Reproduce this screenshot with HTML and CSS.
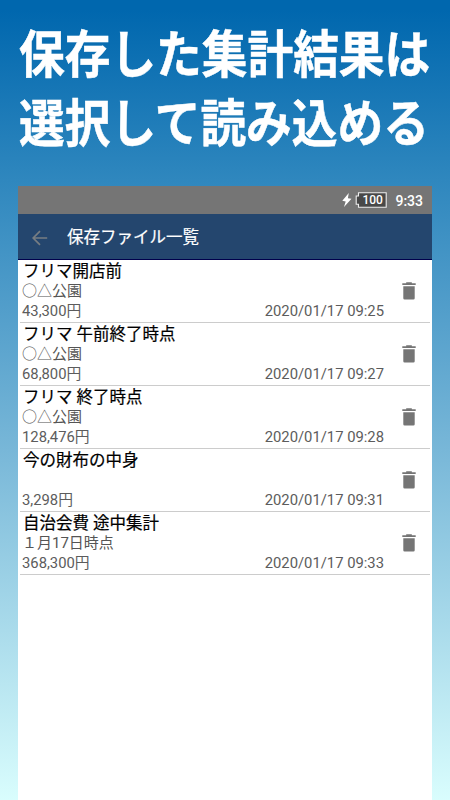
FILE: index.html
```html
<!DOCTYPE html>
<html lang="ja">
<head>
<meta charset="utf-8">
<title>保存ファイル一覧</title>
<link rel="stylesheet" href="styles.css">
</head>
<body>
<svg class="symbols" width="0" height="0"><symbol id="trash" viewBox="0 0 14 18"><path d="M4.2 0.2h5.6v1h3.9v1.9H0.3V1.2h3.9zM1.3 4.2h11.4v12.1q0 1.2-1.3 1.2H2.6q-1.3 0-1.3-1.2z" fill="#757575"/></symbol></svg>
<h1 class="headline"><span>保存した集計結果は</span><span>選択して読み込める</span></h1>
<main class="phone">
  <div class="status">
    <svg class="bolt" width="10" height="14" viewBox="0 0 10 14"><path d="M6.8 0L.3 7.8l3.4.7L2 14l7.5-8.2-3.6-.6z" fill="#fff"/></svg>
    <div class="battery"><svg width="32" height="16" viewBox="0 0 32 16"><path d="M3.5.8h27.7v14.4H3.5v-3H1.2V4h2.3z" fill="#484848" stroke="#eee" stroke-width="1.1"/></svg><span>100</span></div>
    <span class="clock">9:33</span>
  </div>
  <header class="bar">
    <svg width="16" height="16" viewBox="0 0 16 16"><path d="M15.2 8H1.5M8 1.2L1.2 8 8 14.8" fill="none" stroke="#777d82" stroke-width="1.7"/></svg>
    <h2>保存ファイル一覧</h2>
  </header>
  <ul class="list">
    <li><div class="info"><p class="name">フリマ開店前</p><p class="note">○△公園</p><p class="meta"><span>43,300円</span><time>2020/01/17 09:25</time></p></div><svg class="trash"><use href="#trash"/></svg></li>
    <li><div class="info"><p class="name">フリマ 午前終了時点</p><p class="note">○△公園</p><p class="meta"><span>68,800円</span><time>2020/01/17 09:27</time></p></div><svg class="trash"><use href="#trash"/></svg></li>
    <li><div class="info"><p class="name">フリマ 終了時点</p><p class="note">○△公園</p><p class="meta"><span>128,476円</span><time>2020/01/17 09:28</time></p></div><svg class="trash"><use href="#trash"/></svg></li>
    <li><div class="info"><p class="name">今の財布の中身</p><p class="note"></p><p class="meta"><span>3,298円</span><time>2020/01/17 09:31</time></p></div><svg class="trash"><use href="#trash"/></svg></li>
    <li><div class="info"><p class="name">自治会費 途中集計</p><p class="note">１月17日時点</p><p class="meta"><span>368,300円</span><time>2020/01/17 09:33</time></p></div><svg class="trash"><use href="#trash"/></svg></li>
  </ul>
</main>
</body>
</html>
```
FILE: styles.css
```css
* { box-sizing: border-box; margin: 0; padding: 0; }
body {
  height: 800px;
  overflow: hidden;
  display: flex;
  flex-direction: column;
  font-family: Roboto, "Noto Sans CJK JP", sans-serif;
  background: linear-gradient(#0067ae 0, #0067ae 10px, #2f87be 180px, #78b7d8 450px, #d9fdfd 800px);
}
.symbols { position: absolute; }
.headline {
  height: 186px;
  padding: 17px 0 0 19px;
  color: #fff;
  font: bold 51px/69px "Noto Sans CJK JP", sans-serif;
  -webkit-text-stroke: .5px #fff;
  white-space: nowrap;
}
.headline span { display: block; width: 459px; transform: scaleX(.896); transform-origin: 0 50%; }
.phone { width: 414px; height: 614px; margin-left: 18px; background: #fff; }
.status {
  height: 28px;
  display: flex;
  align-items: center;
  padding-right: 9px;
  justify-content: flex-end;
  background: #757575;
  color: #fff;
}
.bolt { margin-right: 3px; }
.battery { display: grid; width: 32px; height: 16px; margin-right: 8px; }
.battery svg, .battery span { grid-area: 1 / 1; }
.battery span { font: 500 12px/16px Roboto, sans-serif; padding-left: 7px; }
.clock { font-size: 14px; font-weight: 500; line-height: 28px; padding-top: 2px; }
.bar {
  height: 46px;
  display: flex;
  align-items: center;
  gap: 19px;
  padding-left: 14px;
  background: #24466e;
  border-bottom: 1px solid #00004c;
}
.bar h2 { color: #fff; font: 400 16.5px/45px "Noto Sans CJK JP", sans-serif; -webkit-text-stroke: .2px #fff; }
.bar svg { margin-top: 2px; }
.list { list-style: none; padding: 0 2px; }
.list li { height: 63px; display: flex; border-bottom: 1px solid #ccc; }
.info { width: 364px; padding-left: 3px; }
.name { height: 21px; padding-top: 1px; font: 400 16.5px/21px Roboto, "Noto Sans CJK JP", sans-serif; color: #000; -webkit-text-stroke: .2px #000; white-space: pre; }
.note, .meta { height: 20px; font-size: 14.8px; line-height: 20px; color: #5c5c5c; }
.note { margin-left: -1px; font-size: 15px; color: #555; }
.meta { display: flex; justify-content: space-between; margin: 0 0 0 -1px; }
.trash { width: 14px; height: 18px; margin: 22px 0 0 18px; }
```
